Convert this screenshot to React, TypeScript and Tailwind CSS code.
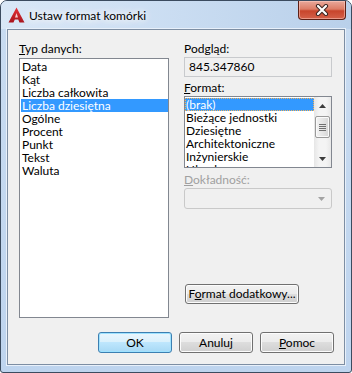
import React from "react";

function Btn({
  children,
  className = "",
  primary = false,
}: {
  children: React.ReactNode;
  className?: string;
  primary?: boolean;
}) {
  return (
    <div
      className={
        "rounded-[3px] border flex items-center justify-center " +
        (primary
          ? "border-[#3c7fb1] bg-[linear-gradient(to_bottom,#eaf6fd_0%,#d9f0fc_50%,#bee6fd_50%,#a7d9f5_100%)] shadow-[inset_0_0_0_1px_#9ee2ff] "
          : "border-[#707070] bg-[linear-gradient(to_bottom,#f2f2f2_0%,#ebebeb_50%,#dddddd_50%,#cfcfcf_100%)] shadow-[inset_0_0_0_1px_#fcfcfc] ") +
        className
      }
    >
      {children}
    </div>
  );
}

function Logo() {
  return (
    <svg width="17" height="16" viewBox="0 0 17 16">
      <defs>
        <linearGradient id="lg" x1="0" y1="0" x2="0" y2="1">
          <stop offset="0" stopColor="#e8333a" />
          <stop offset="1" stopColor="#a8141c" />
        </linearGradient>
      </defs>
      <path d="M8.5 0.5 L16.5 15.5 L11.5 15.5 L10.2 12.5 L6.8 12.5 L5.5 15.5 L0.5 15.5 Z" fill="url(#lg)" />
      <path d="M8.5 6 L10 10.5 L7 10.5 Z" fill="#f6d0d0" />
    </svg>
  );
}

const types = [
  "Data",
  "Kąt",
  "Liczba całkowita",
  "Liczba dziesiętna",
  "Ogólne",
  "Procent",
  "Punkt",
  "Tekst",
  "Waluta",
];

const formats = [
  "(brak)",
  "Bieżące jednostki",
  "Dziesiętne",
  "Architektoniczne",
  "Inżynierskie",
  "Ułamkowe",
];

export default function App() {
  return (
    <div className="w-[352px] h-[373px] font-['Lato',sans-serif] text-[12px] text-black">
      <div className="w-full h-full flex flex-col border border-[#3b4b5f] rounded-t-[7px] rounded-b-[3px] overflow-hidden bg-[linear-gradient(to_bottom,#c9dcf1,#bed4ee)]">
        {/* title bar */}
        <div className="h-[28px] flex items-start bg-[linear-gradient(to_right,#d9e7f6_0%,#cddff3_40%,#b9d0ea_100%)]">
          <div className="mt-[6px] ml-[7px]">
            <Logo />
          </div>
          <div className="ml-[4px] mt-[6px] h-[17px] leading-[17px] text-[12px] text-black [text-shadow:0_0_6px_#ffffff,0_0_10px_#ffffff,0_0_14px_#ffffff]">
            Ustaw format komórki
          </div>
          <div className="ml-auto mr-[5px] w-[48px] h-[19px] rounded-b-[4px] border border-t-0 border-[#5c1f15] bg-[linear-gradient(to_bottom,#e9a99b_0%,#dd7c66_45%,#c8452c_55%,#d4614a_100%)] shadow-[inset_0_0_0_1px_rgba(255,210,200,0.5)] flex items-center justify-center">
            <svg width="14" height="12" viewBox="0 0 14 12">
              <path d="M3 2 L11 10 M11 2 L3 10" stroke="#3d2622" strokeWidth="4.2" strokeLinecap="round" />
              <path d="M3 2 L11 10 M11 2 L3 10" stroke="#ffffff" strokeWidth="2.2" strokeLinecap="round" />
            </svg>
          </div>
        </div>

        {/* body */}
        <div className="flex-1 px-[6px] pb-[7px]">
          <div className="h-full border border-[#7d8ea3] shadow-[0_0_0_1px_#e8f0fa] bg-[#f0f0f0] flex flex-col pt-[11px]">
            <div className="flex pl-[11px]">
              {/* left column */}
              <div className="w-[150px] flex flex-col">
                <div className="h-[15px] leading-[15px]">
                  <span className="underline">T</span>yp danych:
                </div>
                <div className="mt-[2px] h-[260px] border border-[#828790] bg-white pl-[1px] pt-[1px]">
                  {types.map((t) => (
                    <div
                      key={t}
                      className={
                        "h-[13px] leading-[13px] pl-[1px] " +
                        (t === "Liczba dziesiętna" ? "bg-[#3399ff] text-white" : "")
                      }
                    >
                      {t}
                    </div>
                  ))}
                </div>
              </div>

              {/* right column */}
              <div className="ml-[15px] w-[148px] flex flex-col">
                <div className="h-[15px] leading-[15px]">Podgląd:</div>
                <div className="mt-[1px] h-[20px] border border-[#c8cacd] bg-[#f0f0f0] px-[4px] leading-[18px]">
                  845.347860
                </div>
                <div className="mt-[3px] h-[15px] leading-[15px]">
                  <span className="underline">F</span>ormat:
                </div>
                <div className="mt-[1px] h-[72px] border border-[#828790] bg-white flex">
                  <div className="flex-1 pt-[1px] overflow-hidden">
                    {formats.map((f) => (
                      <div
                        key={f}
                        className={
                          "h-[13px] leading-[13px] pl-[1px] " +
                          (f === "(brak)"
                            ? "bg-[#3399ff] text-white outline-1 outline-dotted outline-[#f5b35a] -outline-offset-1"
                            : "")
                        }
                      >
                        {f}
                      </div>
                    ))}
                  </div>
                  <div className="w-[17px] bg-[linear-gradient(to_right,#e6e6e6,#f4f4f4_30%,#f4f4f4_70%,#e8e8e8)] flex flex-col items-center">
                    <div className="h-[17px] flex items-center justify-center">
                      <svg width="7" height="4" viewBox="0 0 7 4">
                        <path d="M3.5 0 L7 4 L0 4 Z" fill="#3c3c3c" />
                      </svg>
                    </div>
                    <div className="mt-[2px] w-[15px] h-[22px] rounded-[2px] border border-[#9a9a9a] bg-[linear-gradient(to_right,#f3f3f3,#e6e6e6_50%,#d6d6d6)] shadow-[inset_0_0_0_1px_#fafafa] flex flex-col items-center justify-center gap-[1px]">
                      <div className="w-[7px] h-[1px] bg-[#707070]" />
                      <div className="w-[7px] h-[1px] bg-[#707070]" />
                      <div className="w-[7px] h-[1px] bg-[#707070]" />
                      <div className="w-[7px] h-[1px] bg-[#707070]" />
                    </div>
                    <div className="flex-1" />
                    <div className="h-[17px] flex items-center justify-center">
                      <svg width="7" height="4" viewBox="0 0 7 4">
                        <path d="M0 0 L7 0 L3.5 4 Z" fill="#3c3c3c" />
                      </svg>
                    </div>
                  </div>
                </div>
                <div className="mt-[4px] h-[15px] leading-[15px] text-[#a0a0a0]">
                  <span className="underline">D</span>okładność:
                </div>
                <div className="mt-[1px] h-[21px] rounded-[3px] border border-[#c9c9c9] bg-[#f0f0f0] flex items-center justify-end pr-[6px]">
                  <svg width="7" height="4" viewBox="0 0 7 4">
                    <path d="M0 0 L7 0 L3.5 4 Z" fill="#a3a3a3" />
                  </svg>
                </div>
                <Btn className="mt-[75px] ml-[1px] w-[114px] h-[20px]">
                  <span>
                    F<span className="underline">o</span>rmat dodatkowy...
                  </span>
                </Btn>
              </div>
            </div>

            {/* bottom buttons */}
            <div className="mt-[14px] flex justify-end gap-[7px] pr-[10px]">
              <Btn primary className="w-[74px] h-[21px]">
                OK
              </Btn>
              <Btn className="w-[74px] h-[21px]">Anuluj</Btn>
              <Btn className="w-[74px] h-[21px]">
                <span>
                  <span className="underline">P</span>omoc
                </span>
              </Btn>
            </div>
          </div>
        </div>
      </div>
    </div>
  );
}
